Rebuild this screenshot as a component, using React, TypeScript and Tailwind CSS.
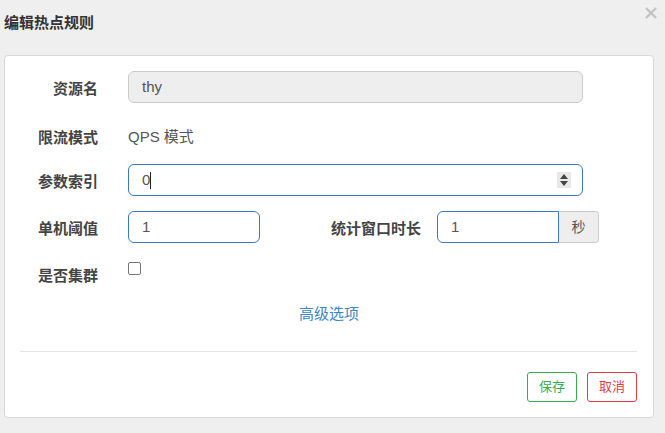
const font = { fontFamily: '"Liberation Sans", "Noto Sans CJK SC", sans-serif' };

const Label = ({ text }: { text: string }) => (
  <div className="w-[78px] shrink-0 text-right text-[15px] font-bold text-[#444] pt-[4px] leading-[22px] whitespace-nowrap">
    {text}
  </div>
);

export default function App() {
  return (
    <div className="w-[665px] h-[433px] bg-[#efefef] overflow-hidden" style={font}>
      <div className="flex justify-between h-[55px]">
        <h4 className="pl-[4px] pt-[12px] text-[15px] font-bold text-[#333] leading-[22px]">编辑热点规则</h4>
        <button className="mr-[8px] mt-[7px] h-[12px] w-[12px]">
          <svg viewBox="0 0 12 12" className="h-[12px] w-[12px]" stroke="#c4c4c4" strokeWidth="2.4">
            <path d="M1 1l10 10M11 1L1 11" />
          </svg>
        </button>
      </div>

      <div className="ml-[4px] w-[650px] h-[363px] bg-white border border-[#d9d9d9] rounded-[4px] pt-[15px] px-[15px]">
        <div className="flex items-center h-[32px]">
          <Label text="资源名" />
          <div className="ml-[30px] w-[455px] h-[32px] bg-[#eee] border border-[#ccc] rounded-[6px] flex items-center pl-[13px] text-[15px] text-[#555]">
            thy
          </div>
        </div>

        <div className="flex items-center h-[32px] mt-[17px]">
          <Label text="限流模式" />
          <div className="ml-[30px] text-[15px] text-[#555] pt-[2px]">QPS 模式</div>
        </div>

        <div className="flex items-center h-[32px] mt-[12px]">
          <Label text="参数索引" />
          <div className="ml-[30px] w-[455px] h-[32px] border border-[#3a7bbf] rounded-[6px] flex items-center pl-[13px] pr-[11px] text-[15px] text-[#555]">
            <span>0</span>
            <span className="w-px h-[17px] bg-[#222]" />
            <span className="ml-auto w-[14px] h-[16px] bg-[#e8e8e8] flex flex-col items-center justify-center gap-[2px]">
              <span className="w-0 h-0 border-x-[4px] border-x-transparent border-b-[5px] border-b-[#444]" />
              <span className="w-0 h-0 border-x-[4px] border-x-transparent border-t-[5px] border-t-[#444]" />
            </span>
          </div>
        </div>

        <div className="flex items-center h-[32px] mt-[15px]">
          <Label text="单机阈值" />
          <div className="ml-[30px] w-[132px] h-[32px] border border-[#3a7bbf] rounded-[6px] flex items-center pl-[13px] text-[15px] text-[#555]">
            1
          </div>
          <div className="w-[161px] text-right text-[15px] font-bold text-[#444] pt-[4px] leading-[22px] whitespace-nowrap">
            统计窗口时长
          </div>
          <div className="ml-[16px] flex h-[32px]">
            <div className="w-[122px] border border-[#3a7bbf] rounded-l-[6px] flex items-center pl-[13px] text-[15px] text-[#555]">
              1
            </div>
            <div className="w-[40px] bg-[#eee] border border-l-0 border-[#ccc] rounded-r-[4px] flex items-center justify-center text-[14px] text-[#555]">
              秒
            </div>
          </div>
        </div>

        <div className="flex items-start mt-[15px]">
          <div className="w-[78px] shrink-0 text-right text-[15px] font-bold text-[#444] pt-[7px] leading-[22px]">是否集群</div>
          <span className="ml-[30px] mt-[4px] w-[13px] h-[13px] border border-[#767676] rounded-[2px] bg-white" />
        </div>

        <div className="mt-[16px] text-center text-[15px] leading-[22px] text-[#3c85c6]">高级选项</div>

        <div className="mt-[26px] h-px bg-[#e5e5e5] mr-[1px]" />

        <div className="mt-[20px] flex justify-end gap-[10px] mr-[1px]">
          <button className="w-[50px] h-[30px] border border-[#3aaa52] rounded-[3px] text-[13px] text-[#3aaa52] bg-white">
            保存
          </button>
          <button className="w-[50px] h-[30px] border border-[#dd3c4b] rounded-[3px] text-[13px] text-[#dd3c4b] bg-white">
            取消
          </button>
        </div>
      </div>
    </div>
  );
}
